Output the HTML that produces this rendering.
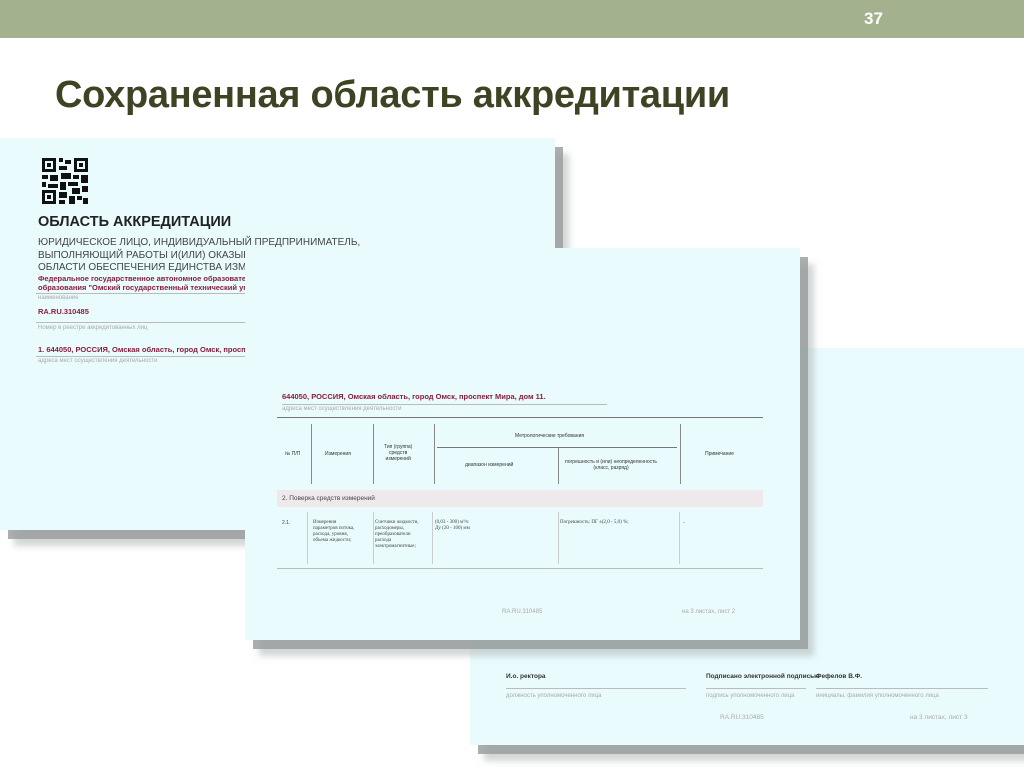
<!DOCTYPE html>
<html><head><meta charset="utf-8"><style>
*{margin:0;padding:0;box-sizing:border-box}
body{width:1024px;height:767px;background:#fff;position:relative;overflow:hidden;font-family:"Liberation Sans",sans-serif}
.bar{position:absolute;left:0;top:0;width:1024px;height:38px;background:#a3b18f}
.num{position:absolute;left:864px;top:9px;color:#fff;font-weight:bold;font-size:17px}
h1{position:absolute;left:55px;top:74px;font-size:38px;color:#3d4424;font-weight:bold;letter-spacing:-0.3px;white-space:nowrap}
.doc{position:absolute;background:#e9fbfd;box-shadow:8px 9px 0 rgba(150,155,155,.8),14px 16px 6px rgba(170,175,175,.5)}
.a{position:absolute;font-size:9px;white-space:nowrap}
.red{color:#8b1d3c;font-weight:bold}
.gr{color:#aaa;font-size:6px}
.ln{position:absolute;height:1px;background:#999}
.vl{position:absolute;width:1px;background:#888}
</style></head><body>
<div class="bar"></div><div class="num">37</div>
<h1>Сохраненная область аккредитации</h1>

<div class="doc" style="left:0;top:138px;width:555px;height:392px">
<svg style="position:absolute;left:42px;top:20px" width="46" height="46" viewBox="0 0 46 46">
<rect width="46" height="46" fill="#e9fbfd"/>
<rect x="0" y="0" width="14" height="14" fill="#111"/><rect x="3" y="3" width="8" height="8" fill="#e9fbfd"/><rect x="5" y="5" width="4" height="4" fill="#111"/>
<rect x="32" y="0" width="14" height="14" fill="#111"/><rect x="35" y="3" width="8" height="8" fill="#e9fbfd"/><rect x="37" y="5" width="4" height="4" fill="#111"/>
<rect x="0" y="32" width="14" height="14" fill="#111"/><rect x="3" y="35" width="8" height="8" fill="#e9fbfd"/><rect x="5" y="37" width="4" height="4" fill="#111"/>
<path d="M17 0h4v4h-4zM23 2h6v4h-6zM17 8h8v4h-8zM0 17h6v4H0zM8 17h8v6H8zM19 15h10v6H19zM31 17h6v4h-6zM39 17h7v8h-7zM0 24h4v5H0zM6 26h10v4H6zM18 24h6v8h-6zM26 24h10v4H26zM30 30h8v6h-8zM40 28h6v6h-6zM17 34h8v6h-8zM27 38h6v8h-6zM35 38h5v4h-5zM41 40h5v6h-5zM17 42h6v4h-6z" fill="#111"/>
</svg>
<div class="a" style="left:38px;top:76px;font-size:14.5px;font-weight:bold;color:#222">ОБЛАСТЬ АККРЕДИТАЦИИ</div>
<div class="a" style="left:38px;top:99px;font-size:10px;color:#444;line-height:12.5px">ЮРИДИЧЕСКОЕ ЛИЦО, ИНДИВИДУАЛЬНЫЙ ПРЕДПРИНИМАТЕЛЬ,<br>ВЫПОЛНЯЮЩИЙ РАБОТЫ И(ИЛИ) ОКАЗЫЕ<br>ОБЛАСТИ ОБЕСПЕЧЕНИЯ ЕДИНСТВА ИЗМ</div>
<div class="a red" style="left:38px;top:136px;font-size:7.5px;line-height:9px">Федеральное государственное автономное образовател<br>образования "Омский государственный технический уни</div>
<div class="ln" style="left:36px;top:155px;width:210px;background:#bbb"></div>
<div class="a gr" style="left:38px;top:157px">наименование</div>
<div class="a red" style="left:38px;top:169px;font-size:7.5px">RA.RU.310485</div>
<div class="ln" style="left:36px;top:184px;width:210px;background:#bbb"></div>
<div class="a gr" style="left:38px;top:187px">Номер в реестре аккредитованных лиц</div>
<div class="a red" style="left:38px;top:207px;font-size:7.5px">1. 644050, РОССИЯ, Омская область, город Омск, проспе</div>
<div class="ln" style="left:36px;top:218px;width:210px;background:#bbb"></div>
<div class="a gr" style="left:38px;top:220px">адреса мест осуществления деятельности</div>
</div>

<div class="doc" style="left:470px;top:348px;width:554px;height:397px">
<div class="a" style="left:36px;top:325px;font-size:6.5px;font-weight:bold;color:#333">И.о. ректора</div>
<div class="a" style="left:236px;top:325px;font-size:6.5px;font-weight:bold;color:#333">Подписано электронной подписью</div>
<div class="a" style="left:346px;top:325px;font-size:6.5px;font-weight:bold;color:#333">Фефелов В.Ф.</div>
<div class="ln" style="left:36px;top:340px;width:180px;background:#bbb"></div>
<div class="ln" style="left:236px;top:340px;width:100px;background:#bbb"></div>
<div class="ln" style="left:346px;top:340px;width:172px;background:#bbb"></div>
<div class="a gr" style="left:36px;top:345px">должность уполномоченного лица</div>
<div class="a gr" style="left:236px;top:345px">подпись уполномоченного лица</div>
<div class="a gr" style="left:346px;top:345px">инициалы, фамилия уполномоченного лица</div>
<div class="a gr" style="left:250px;top:366px;font-size:6.5px">RA.RU.310485</div>
<div class="a gr" style="left:440px;top:366px;font-size:6.5px">на 3 листах, лист 3</div>
</div>

<div class="doc" style="left:245px;top:248px;width:555px;height:392px">
<div class="a red" style="left:37px;top:144px;font-size:7.5px">644050, РОССИЯ, Омская область, город Омск, проспект Мира, дом 11.</div>
<div class="ln" style="left:37px;top:156px;width:325px;background:#bbb"></div>
<div class="a gr" style="left:37px;top:158px">адреса мест осуществления деятельности</div>
<div class="ln" style="left:32px;top:169px;width:486px;background:#777"></div>
<div class="vl" style="left:66px;top:176px;height:60px"></div>
<div class="vl" style="left:128px;top:176px;height:60px"></div>
<div class="vl" style="left:189px;top:176px;height:60px"></div>
<div class="vl" style="left:435px;top:176px;height:60px"></div>
<div class="vl" style="left:313px;top:200px;height:36px"></div>
<div class="ln" style="left:192px;top:199px;width:240px;background:#777"></div>
<div class="a" style="left:40px;top:203px;font-size:5px;color:#333">№ П/П</div>
<div class="a" style="left:80px;top:203px;font-size:5px;color:#333">Измерения</div>
<div class="a" style="left:139px;top:196px;font-size:5px;color:#333;text-align:center;line-height:6px">Тип (группа)<br>средств<br>измерений</div>
<div class="a" style="left:270px;top:185px;font-size:5px;color:#333">Метрологические требования</div>
<div class="a" style="left:220px;top:214px;font-size:5px;color:#333">диапазон измерений</div>
<div class="a" style="left:320px;top:211px;font-size:5px;color:#333;text-align:center;line-height:6px">погрешность и (или) неопределенность<br>(класс, разряд)</div>
<div class="a" style="left:460px;top:203px;font-size:5px;color:#333">Примечание</div>
<div style="position:absolute;left:32px;top:242px;width:486px;height:17px;background:#efe9ec"></div>
<div class="a" style="left:37px;top:247px;font-size:6.5px;color:#444">2. Поверка средств измерений</div>
<div class="a" style="left:37px;top:272px;font-size:5px;color:#444">2.1.</div>
<div class="a" style="left:68px;top:272px;font-size:5px;color:#444;line-height:6px;font-family:'Liberation Serif',serif">Измерения<br>параметров потока,<br>расхода, уровня,<br>объема жидкости;</div>
<div class="a" style="left:130px;top:272px;font-size:5px;color:#444;line-height:6px;font-family:'Liberation Serif',serif">Счетчики жидкости,<br>расходомеры,<br>преобразователи<br>расхода<br>электромагнитные;</div>
<div class="a" style="left:190px;top:272px;font-size:5px;color:#444;line-height:6px;font-family:'Liberation Serif',serif">(0,03 - 300) м³/ч<br>Ду (20 - 100) мм</div>
<div class="a" style="left:315px;top:272px;font-size:5px;color:#444;font-family:'Liberation Serif',serif">Погрешность: ПГ ±(2,0 - 5,0) %;</div>
<div class="a" style="left:438px;top:272px;font-size:5px;color:#444">-</div>
<div class="vl" style="left:62px;top:264px;height:52px;background:#ccc"></div>
<div class="vl" style="left:128px;top:264px;height:52px;background:#ccc"></div>
<div class="vl" style="left:187px;top:264px;height:52px;background:#ccc"></div>
<div class="vl" style="left:313px;top:264px;height:52px;background:#ccc"></div>
<div class="vl" style="left:434px;top:264px;height:52px;background:#ccc"></div>
<div class="ln" style="left:32px;top:320px;width:486px;background:#bbb"></div>
<div class="a gr" style="left:257px;top:361px;font-size:6px">RA.RU.310485</div>
<div class="a gr" style="left:437px;top:361px;font-size:6px">на 3 листах, лист 2</div>
</div>
</body></html>
